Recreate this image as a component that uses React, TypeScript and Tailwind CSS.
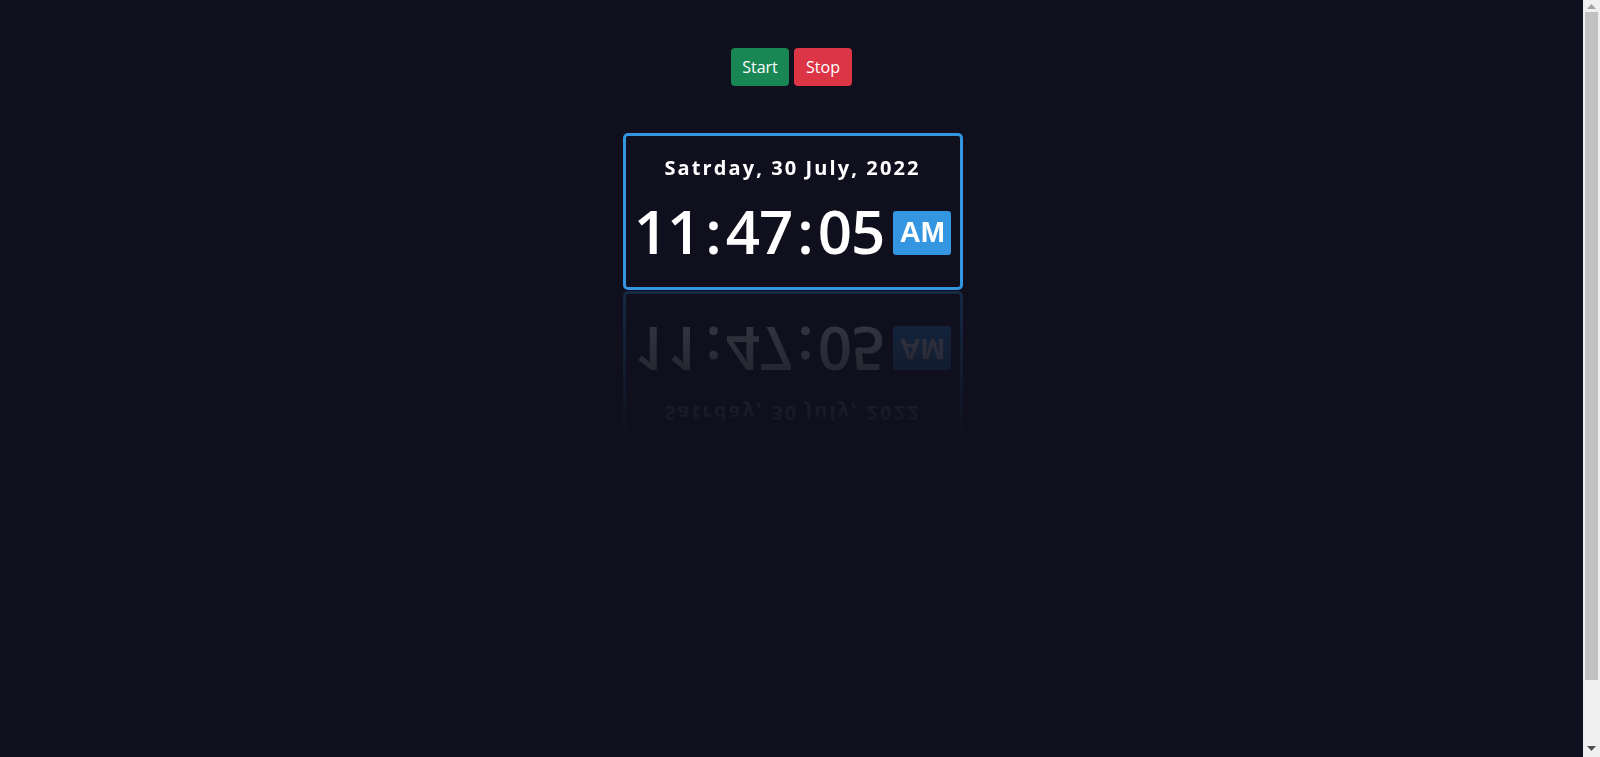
import React from "react";

export default function App() {
  return (
    <div className="h-screen w-full flex overflow-hidden bg-[#0f0f1d]" style={{ fontFamily: '"Open Sans", "Noto Sans", sans-serif' }}>
      <div className="flex-1 flex flex-col items-center pt-[48px]">
        <div className="flex gap-[5px]">
          <button className="h-[38px] w-[58px] rounded-[4px] bg-[#198754] text-white text-[16px] leading-[24px]">Start</button>
          <button className="h-[38px] w-[58px] rounded-[4px] bg-[#dc3545] text-white text-[16px] leading-[24px]">Stop</button>
        </div>
        <div className="mt-[47px] ml-[2px] w-[340px] h-[157px] border-[3px] border-[#3496e0] rounded-[5px] flex flex-col items-center justify-center [-webkit-box-reflect:below_1px_linear-gradient(transparent,#0003)]">
          <div className="text-white font-bold text-[20px] tracking-[2.1px] leading-[28px] mt-[-7px]">Satrday, 30 July, 2022</div>
          <div className="flex items-center mt-[17px]">
            <div className="text-white font-semibold text-[60px] leading-[64px] tracking-[-1px] flex items-center">
              <span>11</span><span className="mx-[5px]">:</span><span>47</span><span className="mx-[5px]">:</span><span>05</span>
            </div>
            <div className="ml-[9px] w-[58px] h-[44px] mt-[4px] bg-[#3496e0] rounded-[3px] flex items-center justify-center text-white font-bold text-[29px]" style={{ fontFamily: '"Liberation Sans", Arial, sans-serif' }}>AM</div>
          </div>
        </div>
      </div>
      <div className="w-[17px] h-full bg-[#f0f0f0] flex flex-col items-center">
        <div className="h-[12px] w-full flex items-center justify-center">
          <svg width="9" height="5" viewBox="0 0 9 5"><path d="M4.5 0 L9 5 L0 5 Z" fill="#a3a3a3" /></svg>
        </div>
        <div className="w-[13px] h-[668px] bg-[#c1c1c1]" />
        <div className="flex-1" />
        <div className="h-[17px] w-full flex items-center justify-center">
          <svg width="9" height="5" viewBox="0 0 9 5"><path d="M0 0 L9 0 L4.5 5 Z" fill="#505050" /></svg>
        </div>
      </div>
    </div>
  );
}
